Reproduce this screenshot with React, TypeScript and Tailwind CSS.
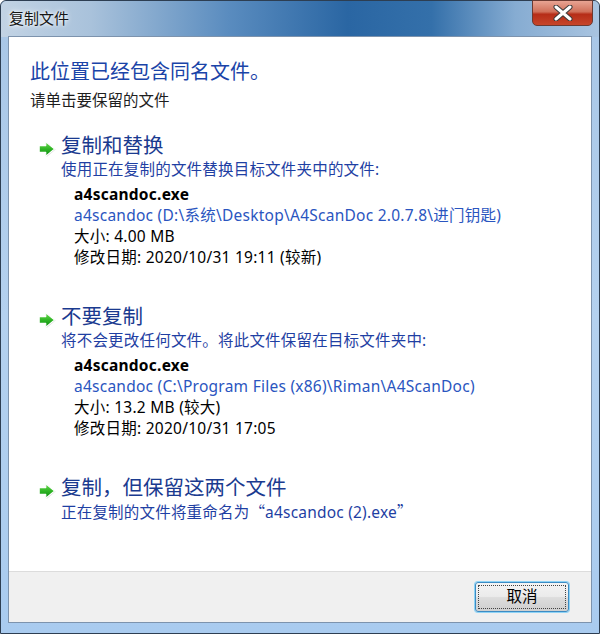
import React from "react";

function GreenArrow() {
  return (
    <svg width="19" height="17" viewBox="0 0 19 17" className="mt-[9px] shrink-0">
      <defs>
        <linearGradient id="ga" x1="0" y1="0" x2="0" y2="1">
          <stop offset="0" stopColor="#6fdc55" />
          <stop offset="0.5" stopColor="#2fb524" />
          <stop offset="1" stopColor="#0c8a14" />
        </linearGradient>
      </defs>
      <path d="M2.2 5.2 H8.6 V1.2 L17.6 8.6 L8.6 16 V12 H2.2 Z" fill="#000000" opacity="0.15" />
      <path
        d="M1.2 4.6 H7.8 V0.9 L16.6 8 L7.8 15.1 V11.4 H1.2 Z"
        fill="url(#ga)"
        stroke="#ffffff"
        strokeWidth="1.1"
        strokeLinejoin="round"
      />
    </svg>
  );
}

function CommandLink({
  title,
  desc,
  children,
}: {
  title: string;
  desc: React.ReactNode;
  children?: React.ReactNode;
}) {
  return (
    <div className="flex flex-col">
      <div className="flex items-start pl-[29px]">
        <GreenArrow />
        <span className="ml-[4px] text-[20.5px] leading-[26px] text-[#1a3a8f]">{title}</span>
      </div>
      <div className="mt-[1px] pl-[52px] text-[15.5px] leading-[21px] tracking-[0.2px] text-[#1f3fa3]">{desc}</div>
      {children && (
        <div className="mt-[4px] pl-[65px] text-[15.5px] leading-[21px] tracking-[0.25px]">{children}</div>
      )}
    </div>
  );
}

export default function App() {
  return (
    <div className="w-[600px] h-[634px] font-['Noto_Sans','Noto_Sans_CJK_SC',sans-serif] text-black">
      <div className="relative flex h-full w-full flex-col rounded-t-[6px] border border-[#2d3e52] bg-gradient-to-b from-[#a8c6e6] via-[#b4d1ef] to-[#a9cbef] px-[7px] pb-[10px]">
        {/* title bar */}
        <div className="absolute inset-x-0 top-0 h-[36px] rounded-t-[6px] bg-[linear-gradient(90deg,#c2d3e4_0%,#a9c2db_15%,#5a8cbf_38%,#2a66a3_58%,#3470aa_72%,#86acd2_86%,#a9c4e0_100%)]" />
        <div className="relative flex h-[35px] items-center pl-[1px]">
          <span className="text-[15px] text-[#161616] [text-shadow:0_0_6px_#ffffff,0_0_3px_#ffffff]">复制文件</span>
        </div>
        <div className="absolute right-[6px] top-[-1px] flex h-[26px] w-[61px] items-center justify-center rounded-b-[5px] border border-[#6b3a32] bg-[linear-gradient(180deg,#e8a493_0%,#d0705a_45%,#b62d18_55%,#c6452a_100%)]">
          <svg width="22" height="16" viewBox="0 0 22 16">
            <path d="M4 2 L18 14 M18 2 L4 14" stroke="#3b3b3b" strokeWidth="5" strokeLinecap="round" />
            <path d="M4 2 L18 14 M18 2 L4 14" stroke="#ffffff" strokeWidth="3" strokeLinecap="round" />
          </svg>
        </div>

        {/* content */}
        <div className="relative flex flex-1 flex-col border border-[#7d93ad] bg-white">
          <div className="flex flex-1 flex-col pt-[21px]">
            <div className="pl-[21px] text-[20px] leading-[28px] text-[#1a44a8]">此位置已经包含同名文件。</div>
            <div className="mt-[4px] pl-[21px] text-[15.5px] leading-[21px] text-[#1e1e1e]">请单击要保留的文件</div>

            <div className="mt-[21px]">
              <CommandLink title="复制和替换" desc="使用正在复制的文件替换目标文件夹中的文件:">
                <div className="font-bold">a4scandoc.exe</div>
                <div className="text-[#2a55c0]">a4scandoc (D:\系统\Desktop\A4ScanDoc 2.0.7.8\进门钥匙)</div>
                <div>大小: 4.00 MB</div>
                <div>修改日期: 2020/10/31 19:11 (较新)</div>
              </CommandLink>
            </div>

            <div className="mt-[35px]">
              <CommandLink title="不要复制" desc="将不会更改任何文件。将此文件保留在目标文件夹中:">
                <div className="font-bold">a4scandoc.exe</div>
                <div className="text-[#2a55c0]">a4scandoc (C:\Program Files (x86)\Riman\A4ScanDoc)</div>
                <div>大小: 13.2 MB (较大)</div>
                <div>修改日期: 2020/10/31 17:05</div>
              </CommandLink>
            </div>

            <div className="mt-[35px]">
              <CommandLink
                title="复制，但保留这两个文件"
                desc={
                  <>
                    正在复制的文件将重命名为
                    <span className="font-['Noto_Sans_CJK_SC',sans-serif]">“</span>a4scandoc (2).exe
                    <span className="font-['Noto_Sans_CJK_SC',sans-serif]">”</span>
                  </>
                }
              />
            </div>
          </div>

          {/* footer */}
          <div className="flex h-[51px] items-center justify-end border-t border-[#dcdcdc] bg-[#f0f0f0] pr-[22px]">
            <button className="flex h-[30px] w-[94px] items-center justify-center rounded-[3px] border border-[#3c8cc4] bg-[linear-gradient(180deg,#f4f4f4_0%,#ebebeb_48%,#dddddd_52%,#cfcfcf_100%)] p-[2px] shadow-[0_0_0_1px_#8fd3f5]">
              <span className="flex h-full w-full items-center justify-center border border-dotted border-[#444444] text-[15.5px] text-black">
                取消
              </span>
            </button>
          </div>
        </div>
      </div>
    </div>
  );
}
